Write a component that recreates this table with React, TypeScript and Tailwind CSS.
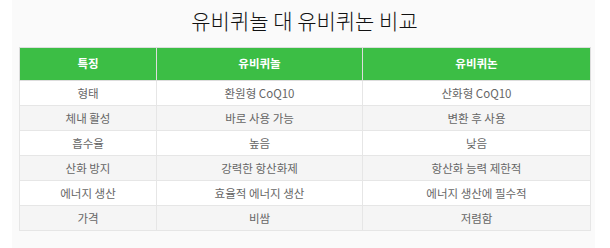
const rows: [string, string, string][] = [
  ['형태', '환원형 CoQ10', '산화형 CoQ10'],
  ['체내 활성', '바로 사용 가능', '변환 후 사용'],
  ['흡수율', '높음', '낮음'],
  ['산화 방지', '강력한 항산화제', '항산화 능력 제한적'],
  ['에너지 생산', '효율적 에너지 생산', '에너지 생산에 필수적'],
  ['가격', '비쌈', '저렴함'],
]

export default function App() {
  return (
    <div className="min-h-screen bg-white font-['Noto_Sans_CJK_KR','Noto_Sans',sans-serif]">
      <div className="ml-[12px] min-h-[248px] w-[583px] bg-[#fafafa] pl-[7px] pr-[5px] pt-[5px]">
        <h1 className="h-[42px] text-center text-[21px] leading-[30px] font-light text-[#111]">
          유비퀴놀 대 유비퀴논 비교
        </h1>
        <table className="w-[571px] table-fixed border-collapse text-[11.5px] text-[#666]">
          <colgroup>
            <col className="w-[137px]" />
            <col className="w-[206px]" />
            <col className="w-[228px]" />
          </colgroup>
          <thead>
            <tr className="h-[33px] bg-[#3cbe45] text-white">
              <th className="border border-[#dddddd] font-bold">특징</th>
              <th className="border border-[#dddddd] font-bold">유비퀴놀</th>
              <th className="border border-[#dddddd] font-bold">유비퀴논</th>
            </tr>
          </thead>
          <tbody>
            {rows.map((r, i) => (
              <tr key={r[0]} className={`h-[25px] ${i % 2 === 1 ? 'bg-[#f5f5f5]' : 'bg-white'}`}>
                {r.map((c, j) => (
                  <td key={j} className="border border-[#e6e6e6] p-0 text-center leading-[24px]">
                    {c}
                  </td>
                ))}
              </tr>
            ))}
          </tbody>
        </table>
      </div>
    </div>
  )
}
